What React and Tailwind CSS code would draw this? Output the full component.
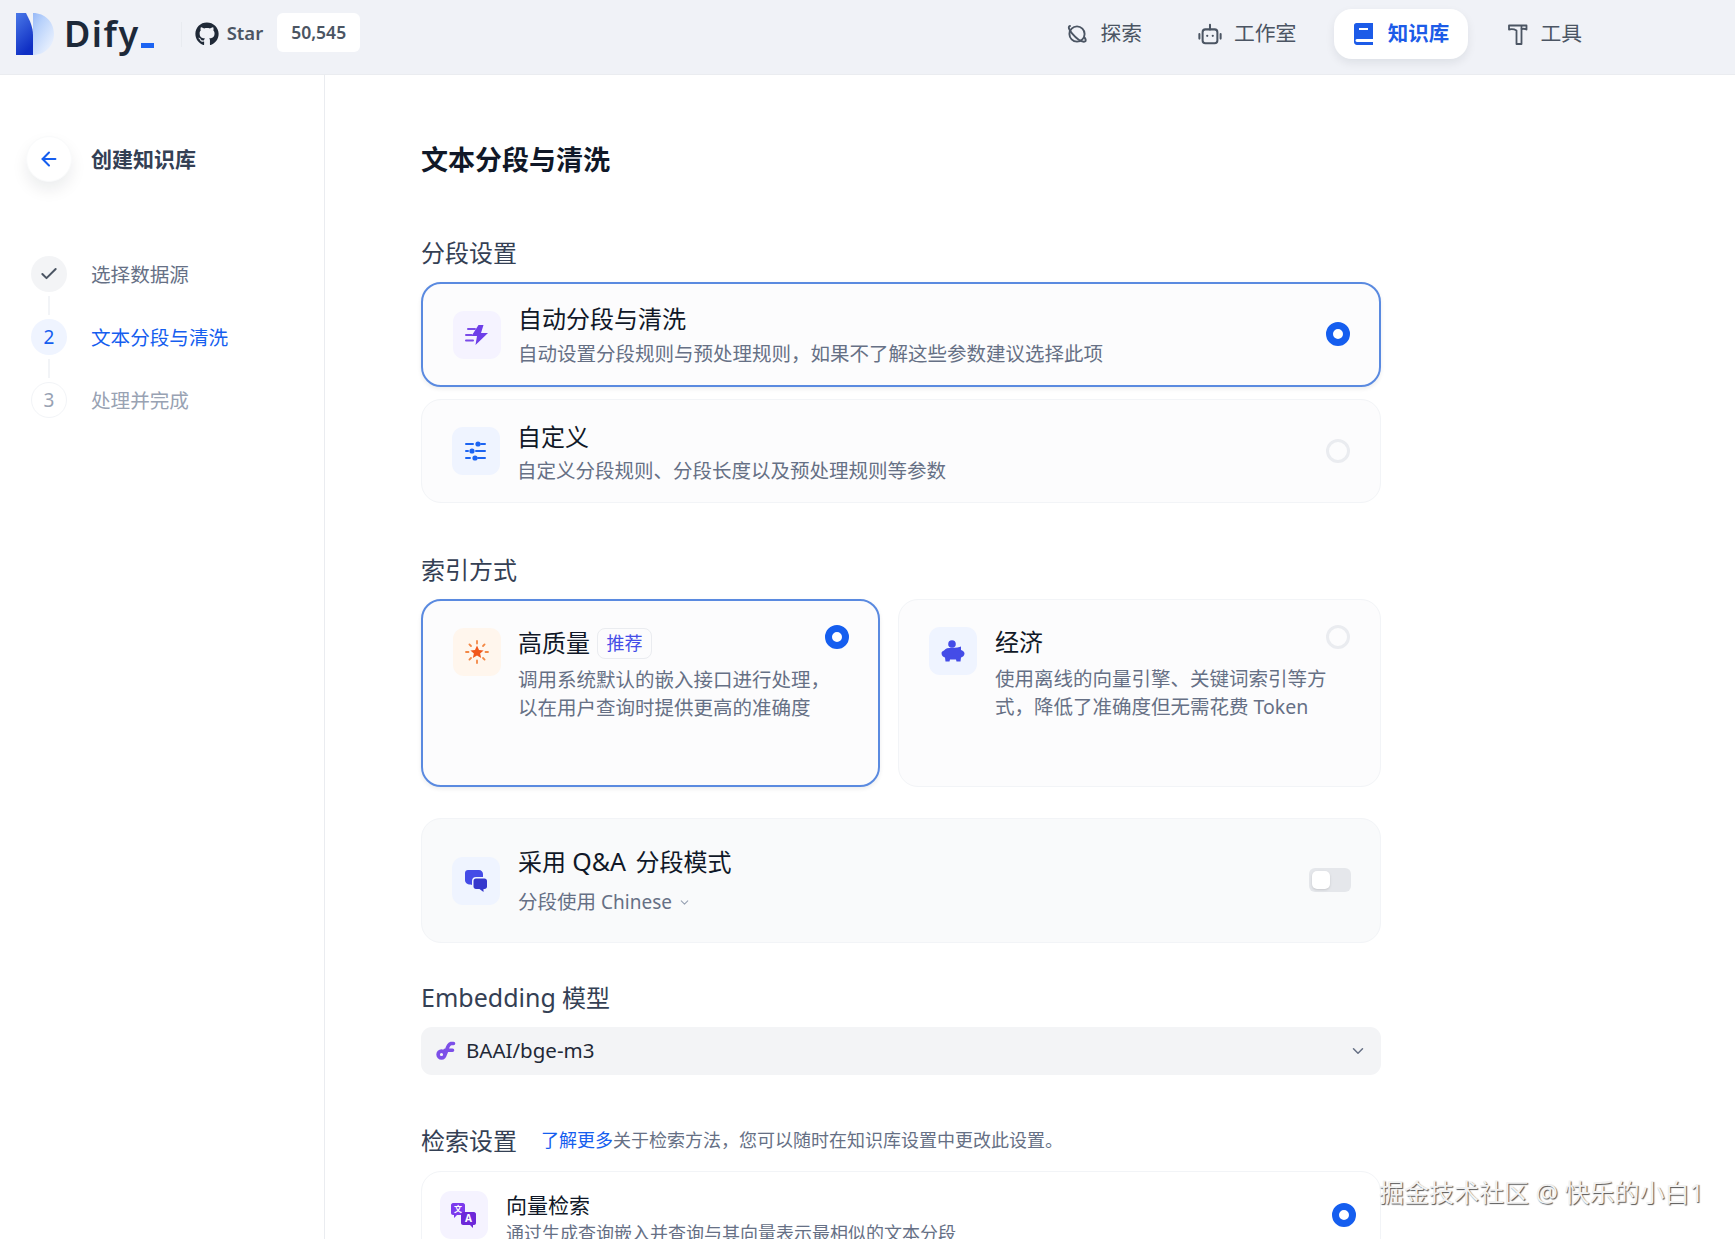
import { Check, ArrowLeft, ChevronDown } from 'lucide-react';
import { FaGithub } from 'react-icons/fa';

const font = { fontFamily: '"Noto Sans", "Noto Sans CJK SC", sans-serif' };

function DifyLogo() {
  return (
    <svg width="38" height="42" viewBox="0 0 38 42" fill="none">
      <defs>
        <linearGradient id="dlight" x1="0" y1="0" x2="1" y2="0.7">
          <stop offset="0" stopColor="#6f9bf2" />
          <stop offset="0.55" stopColor="#b9d2fb" />
          <stop offset="1" stopColor="#e8f0fe" />
        </linearGradient>
        <linearGradient id="ddark" x1="0" y1="0" x2="0.4" y2="1">
          <stop offset="0" stopColor="#4a78e8" />
          <stop offset="1" stopColor="#0f2fc4" />
        </linearGradient>
      </defs>
      <path d="M0 0H17C29 0 38 9 38 21C38 33 29 42 17 42V0Z" fill="url(#dlight)" />
      <path d="M0 0H10C14 8 17 14 17 22V42H0V0Z" fill="url(#ddark)" />
    </svg>
  );
}

function PlanetIcon() {
  return (
    <svg width="22" height="22" viewBox="0 0 22 22" fill="none" stroke="#4b5563" strokeWidth="1.9" strokeLinecap="round">
      <circle cx="11" cy="11" r="7.6" />
      <path d="M4 3C1.8 3.4 2.8 6.6 6 10.4C9.8 14.8 15.4 19.2 18.6 18.6C20.4 18.2 19.8 16.4 18.6 14.6" />
    </svg>
  );
}

function RobotIcon() {
  return (
    <svg width="24" height="24" viewBox="0 0 26 26" fill="none" stroke="#4b5563" strokeWidth="2.2" strokeLinecap="round">
      <rect x="5" y="8" width="16" height="15" rx="3" />
      <path d="M13 3V8M1.5 13V18M24.5 13V18" />
      <circle cx="10" cy="15" r="1.2" fill="#4b5563" stroke="none" />
      <circle cx="16" cy="15" r="1.2" fill="#4b5563" stroke="none" />
    </svg>
  );
}

function BookIcon() {
  return (
    <svg width="19" height="22" viewBox="0 0 19 22" fill="none">
      <path d="M2.5 0H19V16H3C1.8 16 1.5 17 1.5 17.6C1.5 18.4 2 19 3 19H19V22H3C1.2 22 0 20.6 0 19V2.5C0 1 1 0 2.5 0Z" fill="#1c5be8" />
      <rect x="5" y="5" width="9" height="2" fill="#fff" />
    </svg>
  );
}

function HammerIcon() {
  return (
    <svg width="20" height="22" viewBox="0 0 20 22" fill="none" stroke="#4b5563" strokeWidth="1.8" strokeLinejoin="round">
      <path d="M1 2.5H18.5V6.5C17 5.6 15.6 5.4 13.5 6.2V21H8.5V7.5C6 6 3.5 6 1 6.5V2.5Z" />
      <path d="M13.5 2.5V6.2" />
    </svg>
  );
}

function BoltIcon() {
  return (
    <svg width="24" height="22" viewBox="0 0 24 22" fill="none">
      <path d="M13.5 1L6.5 12H12L10.5 21L23 9H16L18.5 1H13.5Z" fill="#6d3ee8" />
      <path d="M3 5H10M1 11H6.5M1 16.5H8" stroke="#7a4be8" strokeWidth="2" strokeLinecap="round" />
    </svg>
  );
}

function SlidersIcon() {
  return (
    <svg width="22" height="20" viewBox="0 0 22 20" fill="#1c64f2" stroke="#1c64f2" strokeWidth="2" strokeLinecap="round">
      <path d="M1 3H8M16 3H20M1 10H3M11 10H20M1 17H5M13 17H20" fill="none" />
      <circle cx="13" cy="3" r="2.6" stroke="none" />
      <circle cx="7" cy="10" r="2.6" stroke="none" />
      <circle cx="10" cy="17" r="2.6" stroke="none" />
    </svg>
  );
}

function SunIcon() {
  return (
    <svg width="24" height="24" viewBox="0 0 24 24" fill="none">
      <path d="M12 5.5L14 10L18.6 10.4L15.1 13.5L16.2 18L12 15.6L7.8 18L8.9 13.5L5.4 10.4L10 10L12 5.5Z" fill="#f1571c" />
      <path d="M12 1V3.5M12 20.5V23M1 12H3.5M20.5 12H23M4.4 4.4L6 6M18 18L19.6 19.6M19.6 4.4L18 6M6 18L4.4 19.6" stroke="#f38744" strokeWidth="1.8" strokeLinecap="round" />
    </svg>
  );
}

function PiggyIcon() {
  return (
    <svg width="24" height="22" viewBox="0 0 24 22" fill="#444ce7">
      <circle cx="11" cy="4" r="3.8" />
      <path d="M3 10.5C4.5 8.5 7 7.8 11 7.8C15 7.8 18.5 7.2 20 6.5V10C21.5 10.5 23.5 11.5 23.5 13.5C23.5 16 21.5 17 20 17.5L19.5 21.5H15.5L15 19.5H9L8.5 21.5H4.5L4 17.5C2.5 17 0.5 16 0.5 13C0.5 11.8 1.8 11 3 10.5Z" />
    </svg>
  );
}

function ChatIcon() {
  return (
    <svg width="24" height="24" viewBox="0 0 24 24">
      <path d="M4 1H15C17.2 1 19 2.8 19 5V8H12C9.5 8 8 9.5 8 12V16L6.5 15.5C3 15.5 1 13.5 1 11V4C1 2.3 2.3 1 4 1Z" fill="#444ce7" />
      <path d="M12 9.5H20.5C22 9.5 23 10.5 23 12V17.5C23 19 22 20 20.5 20H19.5V23L15.5 20H12C10.5 20 9.5 19 9.5 17.5V12C9.5 10.5 10.5 9.5 12 9.5Z" fill="#3538cd" />
    </svg>
  );
}

function ModelIcon() {
  return (
    <svg width="20" height="20" viewBox="0 0 20 20" fill="none" stroke="#7c4fe8" strokeWidth="3.6" strokeLinecap="round">
      <circle cx="5.5" cy="13.5" r="3.4" />
      <path d="M8.8 13.5C11 13 10 4 15 2.5H17.5M9 9.2H16.5" />
    </svg>
  );
}

function TranslateIcon() {
  return (
    <svg width="26" height="26" viewBox="0 0 26 26">
      <path d="M2 1H12C13 1 14 2 14 3V11C14 12 13 13 12 13H6L3 16V13H2C1 13 0 12 0 11V3C0 2 1 1 2 1Z" fill="#7c3aed" />
      <path d="M12 10H23C24 10 25 11 25 12V21C25 22 24 23 23 23H22V26L19 23H12C11 23 10 22 10 21V12C10 11 11 10 12 10Z" fill="#6d28d9" />
      <text x="7" y="10" fontSize="8" fontWeight="700" fill="#fff" textAnchor="middle" fontFamily="Noto Sans CJK SC">文</text>
      <text x="17.5" y="20" fontSize="10" fontWeight="700" fill="#fff" textAnchor="middle" fontFamily="Noto Sans">A</text>
    </svg>
  );
}

function Radio({ on }) {
  if (on) return <span className="block w-6 h-6 rounded-full border-[7px] border-[#155eef] bg-white"></span>;
  return <span className="block w-6 h-6 rounded-full border-[3px] border-[#eaecf0] bg-[#fcfcfd]"></span>;
}

function IconBox({ bg, children }) {
  return <div className={`w-12 h-12 shrink-0 rounded-[11px] flex items-center justify-center ${bg}`}>{children}</div>;
}

function SectionLabel({ children }) {
  return <div className="h-8 leading-[32px] text-[24px] text-[#344054]">{children}</div>;
}

function SegmentCard({ active, icon, iconBg, title, desc, h }) {
  return (
    <div className={`flex items-center w-[960px] pl-[30px] rounded-[20px] bg-[#fcfcfd] ${h} ${active ? 'pr-[29px] border-2 border-[#5a8ae0] shadow-[0_2px_4px_rgba(16,24,40,0.08)]' : 'pr-[30px] border border-[#f2f4f7]'}`}>
      <IconBox bg={iconBg}>{icon}</IconBox>
      <div className={`ml-[17px] flex-1 ${active ? 'pt-[2px]' : 'pt-[3px]'}`}>
        <div className="text-[24px] leading-[32px] text-[#101828]">{title}</div>
        <div className={`text-[19.5px] leading-[28px] text-[#667085] ${active ? 'mt-[5px]' : 'mt-[4px]'}`}>{desc}</div>
      </div>
      <div className={active ? 'mb-[2px]' : ''}><Radio on={active} /></div>
    </div>
  );
}

function IndexCard({ active, icon, iconBg, title, badge, lines, w }) {
  return (
    <div className={`relative h-[188px] pl-[30px] pt-[27px] rounded-[20px] bg-[#fcfcfd] flex ${w} ${active ? 'border-2 border-[#5a8ae0] shadow-[0_2px_4px_rgba(16,24,40,0.08)]' : 'border border-[#f2f4f7]'}`}>
      <IconBox bg={iconBg}>{icon}</IconBox>
      <div className={`-mt-[1px] ${active ? 'ml-[17px]' : 'ml-[18px]'}`}>
        <div className="flex items-center h-[32px] text-[24px] text-[#101828]">
          {title}
          {badge && <span className="ml-[7px] h-[31px] w-[55px] rounded-[8px] border border-[#eaecf0] flex items-center justify-center text-[18px] text-[#444ce7]">{badge}</span>}
        </div>
        <div className="mt-[7px] text-[19.5px] leading-[27.5px] text-[#667085]">
          {lines.map(l => <div key={l}>{l}</div>)}
        </div>
      </div>
      <div className={`absolute ${active ? 'right-[29px] top-[24px]' : 'right-[30px] top-[25px]'}`}><Radio on={active} /></div>
    </div>
  );
}

function NavItem({ icon, label, active }) {
  return (
    <div className={`flex items-center h-[50px] rounded-[18px] ${active ? 'w-[134px] gap-[15px] justify-center bg-white text-[20.5px] font-bold text-[#1c5be8] shadow-[0_4px_10px_rgba(16,24,40,0.08)]' : 'gap-[12px] text-[20.8px] text-[#4b5563]'}`}>
      {icon}
      <span className="-mt-[1px]">{label}</span>
    </div>
  );
}

function Step({ state, num, label }) {
  const circle = state === 'done' ? 'bg-[#f3f4f6] text-[#4b5563]' : state === 'current' ? 'bg-[#eff4ff] text-[#155eef]' : 'border border-[#f2f4f7] text-[#98a2b3]';
  const text = state === 'done' ? 'text-[#667085]' : state === 'current' ? 'text-[#155eef]' : 'text-[#98a2b3]';
  return (
    <div className="flex items-center h-9">
      <div className={`ml-[31px] w-9 h-9 rounded-full flex items-center justify-center text-[19px] ${circle}`}>
        {state === 'done' ? <Check size={20} strokeWidth={2.4} /> : num}
      </div>
      <div className={`ml-[24px] pt-[2px] text-[19.6px] ${text}`}>{label}</div>
    </div>
  );
}

function StepLine() {
  return <div className="ml-[48px] my-[4px] w-[2px] h-[19px] bg-[#f2f4f7]"></div>;
}

export default function App() {
  return (
    <div style={font} className="relative h-screen overflow-hidden flex flex-col bg-white">
      <header className="h-[75px] shrink-0 flex items-center bg-[#f0f2f7] border-b border-[#eaecf0] pl-4 pr-[153px] pb-[6px]">
        <DifyLogo />
        <span className="ml-[10px] text-[36px] font-semibold tracking-[1.5px] leading-none text-[#1d2939]">Dify</span>
        <span className="ml-[1px] w-[13px] h-[5px] mt-[22px] bg-[#1c64f2]"></span>
        <span className="ml-[27px] w-px h-[25px] bg-[#e8ebf0]"></span>
        <FaGithub className="ml-[13px] text-[#1f2937]" size={24} />
        <span className="ml-[8px] mb-[2px] text-[18.5px] font-semibold text-[#4b5563]">Star</span>
        <span className="ml-[14px] mb-[3px] w-[83px] h-[39px] rounded-[6px] bg-white flex items-center justify-center text-[17.5px] font-semibold text-[#4b5563]">50,545</span>
        <nav className="ml-auto flex items-center">
          <NavItem icon={<PlanetIcon />} label="探索" />
          <div className="ml-[56px]">
            <NavItem icon={<RobotIcon />} label="工作室" />
          </div>
          <div className="ml-[38px]">
            <NavItem active icon={<BookIcon />} label="知识库" />
          </div>
          <div className="ml-[40px]">
            <NavItem icon={<HammerIcon />} label="工具" />
          </div>
        </nav>
      </header>

      <div className="flex flex-1 min-h-0">
        <aside className="w-[325px] shrink-0 border-r border-[#eaecf0]">
          <div className="flex items-center mt-[61px] ml-[26px]">
            <div className="w-[46px] h-[46px] rounded-full bg-white flex items-center justify-center text-[#155eef] shadow-[0_8px_16px_rgba(16,24,40,0.08)] border border-[#f9fafb]">
              <ArrowLeft size={22} strokeWidth={2.2} />
            </div>
            <div className="ml-[19px] pt-[2px] text-[21px] font-bold text-[#344054]">创建知识库</div>
          </div>
          <div className="mt-[74px]">
            <Step state="done" label="选择数据源" />
            <StepLine />
            <Step state="current" num="2" label="文本分段与清洗" />
            <StepLine />
            <Step state="todo" num="3" label="处理并完成" />
          </div>
        </aside>

        <main className="flex-1 pl-[96px] pt-[69px]">
          <h1 className="h-8 leading-8 text-[27px] font-bold text-[#101828]">文本分段与清洗</h1>

          <div className="mt-[61px] mb-[13px]"><SectionLabel>分段设置</SectionLabel></div>
          <SegmentCard
            active
            h="h-[105px]"
            iconBg="bg-[#f5f3ff]"
            icon={<BoltIcon />}
            title="自动分段与清洗"
            desc="自动设置分段规则与预处理规则，如果不了解这些参数建议选择此项"
          />
          <div className="mt-[12px]">
            <SegmentCard
              h="h-[104px]"
              iconBg="bg-[#eff4ff]"
              icon={<SlidersIcon />}
              title="自定义"
              desc="自定义分段规则、分段长度以及预处理规则等参数"
            />
          </div>

          <div className="mt-[51px] mb-[13px]"><SectionLabel>索引方式</SectionLabel></div>
          <div className="flex w-[960px] gap-[18px]">
            <IndexCard
              active
              w="w-[459px]"
              iconBg="bg-[#fff6ed]"
              icon={<SunIcon />}
              title="高质量"
              badge="推荐"
              lines={['调用系统默认的嵌入接口进行处理，', '以在用户查询时提供更高的准确度']}
            />
            <IndexCard
              w="w-[483px]"
              iconBg="bg-[#eff4ff]"
              icon={<PiggyIcon />}
              title="经济"
              lines={['使用离线的向量引擎、关键词索引等方', '式，降低了准确度但无需花费 Token']}
            />
          </div>

          <div className="mt-[31px] w-[960px] h-[125px] flex items-center pl-[30px] pr-[29px] rounded-[20px] bg-[#f9fafb] border border-[#f2f4f7]">
            <IconBox bg="bg-[#eff4ff]"><ChatIcon /></IconBox>
            <div className="ml-[18px] flex-1">
              <div className="text-[24px] leading-[32px] text-[#101828]">采用 <span className="text-[25px] [word-spacing:3px]">Q&amp;A </span>分段模式</div>
              <div className="mt-[10px] flex items-center text-[19.5px] leading-[28px] text-[#667085]">
                <span>分段使用 <span className="text-[19px]">Chinese</span></span>
                <ChevronDown className="ml-[6px] text-[#98a2b3]" size={13} />
              </div>
            </div>
            <div className="mb-[2px] w-[42px] h-[24px] rounded-[6px] bg-[#e5e7eb] p-[3px]">
              <div className="w-[18px] h-[18px] rounded-[5px] bg-white shadow-sm"></div>
            </div>
          </div>

          <div className="mt-[38px] mb-[14px]"><SectionLabel><span className="text-[25px]">Embedding</span> 模型</SectionLabel></div>
          <div className="w-[960px] h-[48px] flex items-center pl-[15px] pr-[14px] rounded-[11px] bg-[#f3f4f6]">
            <ModelIcon />
            <span className="ml-[10px] -mt-[1px] flex-1 text-[20.5px] text-[#1f2937]">BAAI/bge-m3</span>
            <ChevronDown className="text-[#667085]" size={18} />
          </div>

          <div className="mt-[50px] flex items-center">
            <SectionLabel>检索设置</SectionLabel>
            <div className="ml-[24px] -mt-[1px] text-[18px] text-[#667085]">
              <span className="text-[#155eef]">了解更多</span>关于检索方法，您可以随时在知识库设置中更改此设置。
            </div>
          </div>
          <div className="mt-[14px] w-[960px] h-[130px] flex pl-[18px] pr-[24px] pt-[19px] rounded-[20px] border border-[#f2f4f7] bg-white">
            <IconBox bg="bg-[#f5f3ff]"><TranslateIcon /></IconBox>
            <div className="ml-[18px] -mt-[1px] flex-1">
              <div className="text-[21px] leading-[30px] text-[#101828]">向量检索</div>
              <div className="text-[18px] leading-[26px] text-[#667085]">通过生成查询嵌入并查询与其向量表示最相似的文本分段</div>
            </div>
            <div className="mt-[12px]"><Radio on /></div>
          </div>
        </main>
      </div>

      <div className="absolute left-[1379px] top-[1175px] text-[25px] leading-[34px] whitespace-nowrap text-[#f2f2f2] [text-shadow:1px_1px_1px_#555]">掘金技术社区 @ 快乐的小白1</div>
    </div>
  );
}
